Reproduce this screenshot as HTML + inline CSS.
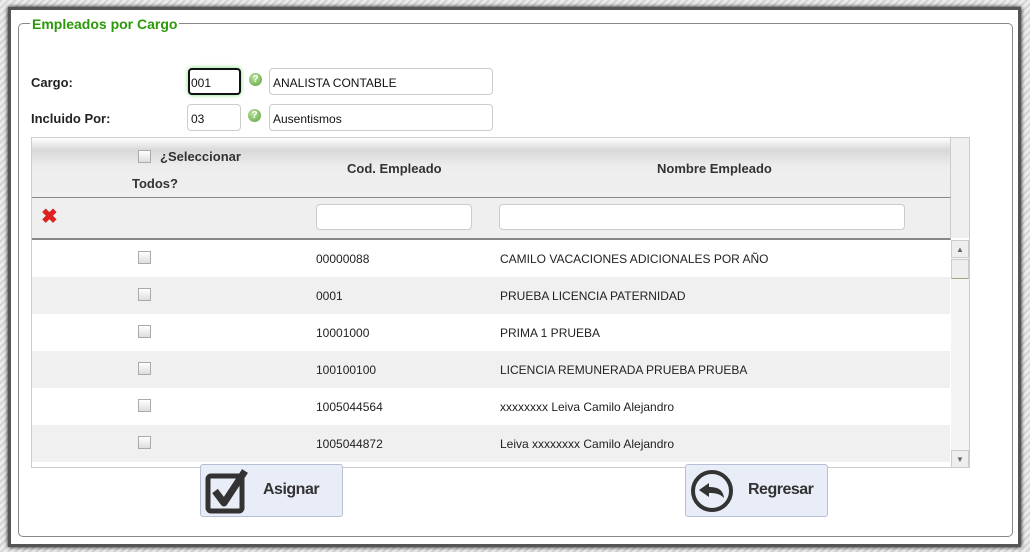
<!DOCTYPE html>
<html><head><meta charset="utf-8"><style>
body{margin:0;width:1030px;height:552px;overflow:hidden;font-family:"Liberation Sans",sans-serif;font-size:12px;background:repeating-linear-gradient(135deg,#d4d4d4 0 2px,#ececec 2px 5px);position:relative}
.panel{position:absolute;left:8px;top:7px;width:1007px;height:534px;background:#fff;border:3px solid #555;box-shadow:0 0 4px #000}
.fs{position:absolute;left:7px;top:13px;width:993px;height:512px;border:1px solid #888;border-radius:5px}
.leg{position:absolute;left:19px;top:6px;background:#fff;color:#2a9a0a;font-weight:bold;font-size:14px;padding:0 2px}
.lbl{position:absolute;font-weight:bold;font-size:13px;color:#222}
.in{position:absolute;border:1px solid #ccc;border-radius:4px;background:#fff;height:24px;box-sizing:border-box;font-size:12px;line-height:28px;padding-left:3px;color:#111}
.q{position:absolute;width:13px;height:13px;border-radius:50%;background:radial-gradient(circle at 40% 35%,#bde6a0,#5a9e3a);color:#fff;font-size:10px;font-weight:bold;text-align:center;line-height:13px}
.grid{position:absolute;left:31px;top:137px;width:939px;height:331px;border:1px solid #ccc;box-sizing:border-box;overflow:hidden}
.hd{position:absolute;left:0;top:0;width:918px;height:59px;background:linear-gradient(#fff 0,#d8d8d8 12px,#ededed 28px,#efefef);border-bottom:1px solid #888;border-right:1px solid #ccc}
.flt{position:absolute;left:0;top:60px;width:918px;height:40px;background:#efefef;border-right:1px solid #ccc;border-bottom:2px solid #888}
.row{position:absolute;left:0;width:918px;height:37px;font-size:12px;color:#222}
.row span{position:absolute;top:12px}
.cb{position:absolute;width:13px;height:13px;border:1px solid #aaa;background:linear-gradient(#fff,#ddd);box-sizing:border-box}
.th{position:absolute;font-weight:bold;font-size:13px;color:#333}
.btn{position:absolute;top:464px;width:143px;height:53px;background:#e8edf8;border:1px solid #b6bfd3;border-radius:3px;box-sizing:border-box}
.btn b{position:absolute;left:62px;top:16px;font-size:16px;color:#333;letter-spacing:-.5px}
</style></head><body>
<div class="panel"></div>
<div style="position:absolute;left:11px;top:10px;width:1007px;height:534px">
<div class="fs"></div>
<div class="leg">Empleados por Cargo</div>
</div>
<div class="lbl" style="left:31px;top:75px">Cargo:</div>
<div class="lbl" style="left:31px;top:111px">Incluido Por:</div>
<div class="in" style="left:188px;top:68px;width:53px;height:27px;border:2px solid #111;box-shadow:0 0 5px #7d7;line-height:26px;padding-left:1px">001</div>
<div class="in" style="left:187px;top:104px;width:54px;height:27px">03</div>
<div class="q" style="left:249px;top:73px">?</div>
<div class="q" style="left:248px;top:109px">?</div>
<div class="in" style="left:269px;top:68px;width:224px;height:27px">ANALISTA CONTABLE</div>
<div class="in" style="left:269px;top:104px;width:224px;height:27px">Ausentismos</div>
<div class="grid">
<div class="hd"></div>
<div class="cb" style="left:106px;top:12px"></div>
<div class="th" style="left:128px;top:11px">¿Seleccionar</div>
<div class="th" style="left:100px;top:38px">Todos?</div>
<div class="th" style="left:315px;top:23px">Cod. Empleado</div>
<div class="th" style="left:625px;top:23px">Nombre Empleado</div>
<div class="flt"></div>
<div style="position:absolute;left:9px;top:69px;color:#d22;font-size:20px;font-weight:bold;line-height:20px">✖</div>
<div class="in" style="left:284px;top:66px;width:156px;height:26px"></div>
<div class="in" style="left:467px;top:66px;width:406px;height:26px"></div>
<div style="position:absolute;left:919px;top:0;width:20px;height:100px;background:#efefef"></div>
<div style="position:absolute;left:919px;top:102px;width:18px;height:228px;background:#f4f4f4"></div>
<div style="position:absolute;left:919px;top:102px;width:18px;height:18px;background:#eee;border:1px solid #ccc;box-sizing:border-box;text-align:center;font-size:8px;color:#666;line-height:18px">▲</div>
<div style="position:absolute;left:919px;top:121px;width:18px;height:20px;background:#eee;border:1px solid #ccc;border-bottom-color:#9a8;box-sizing:border-box"></div>
<div style="position:absolute;left:919px;top:312px;width:18px;height:18px;background:#eee;border:1px solid #ccc;box-sizing:border-box;text-align:center;font-size:8px;color:#666;line-height:18px">▼</div>
<div class="row" style="top:102px;background:#fff"><div class="cb" style="left:106px;top:11px"></div><span style="left:284px">00000088</span><span style="left:468px">CAMILO VACACIONES ADICIONALES POR AÑO</span></div>
<div class="row" style="top:139px;background:#f0f0f0"><div class="cb" style="left:106px;top:11px"></div><span style="left:284px">0001</span><span style="left:468px">PRUEBA LICENCIA PATERNIDAD</span></div>
<div class="row" style="top:176px;background:#fff"><div class="cb" style="left:106px;top:11px"></div><span style="left:284px">10001000</span><span style="left:468px">PRIMA 1 PRUEBA</span></div>
<div class="row" style="top:213px;background:#f0f0f0"><div class="cb" style="left:106px;top:11px"></div><span style="left:284px">100100100</span><span style="left:468px">LICENCIA REMUNERADA PRUEBA PRUEBA</span></div>
<div class="row" style="top:250px;background:#fff"><div class="cb" style="left:106px;top:11px"></div><span style="left:284px">1005044564</span><span style="left:468px">xxxxxxxx Leiva Camilo Alejandro</span></div>
<div class="row" style="top:287px;background:#f0f0f0"><div class="cb" style="left:106px;top:11px"></div><span style="left:284px">1005044872</span><span style="left:468px">Leiva xxxxxxxx Camilo Alejandro</span></div>
</div>
<div class="btn" style="left:200px">
<svg style="position:absolute;left:4px;top:2px" width="48" height="48" viewBox="0 0 48 48"><rect x="3" y="9" width="34" height="35" rx="3" fill="none" stroke="#333" stroke-width="5"/><path d="M10 24 L19 36 L40 4" fill="none" stroke="#333" stroke-width="7" stroke-linejoin="round"/></svg>
<b>Asignar</b></div>
<div class="btn" style="left:685px">
<svg style="position:absolute;left:3px;top:3px" width="46" height="46" viewBox="0 0 46 46"><circle cx="23" cy="23" r="19" fill="none" stroke="#333" stroke-width="4"/><path d="M10 22 L20 15 L20 19 C28 19 34 21 35 30 C31 26 27 25 20 25 L20 29 Z" fill="#333"/></svg>
<b>Regresar</b></div>
</body></html>
